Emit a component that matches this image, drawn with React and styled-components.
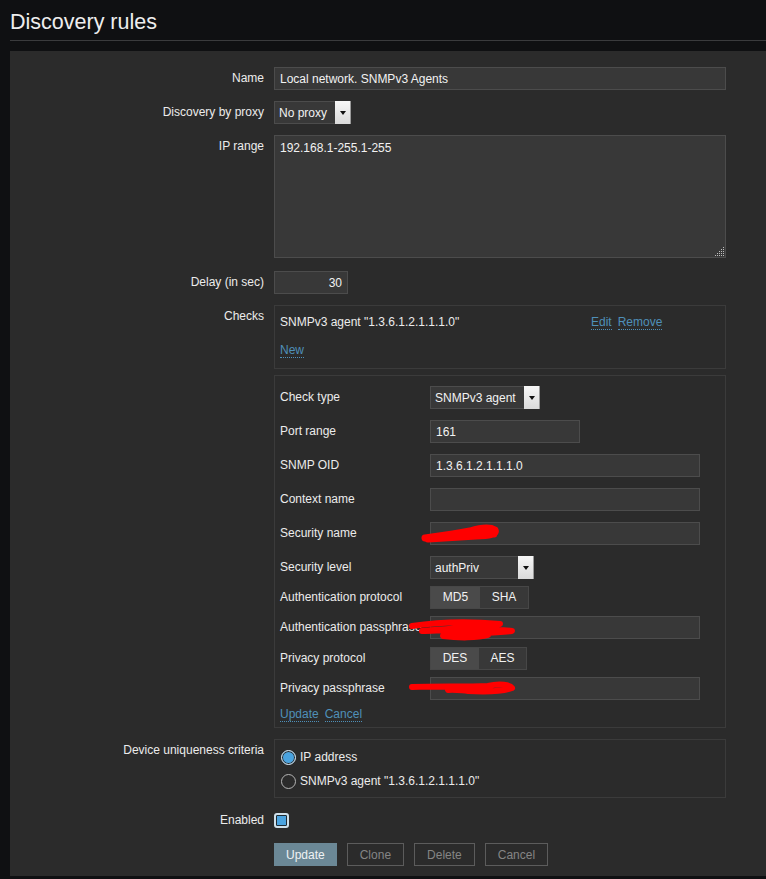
import React from "react";
import styled, { createGlobalStyle } from "styled-components";

const GlobalStyle = createGlobalStyle`
  html, body {
    margin: 0;
    padding: 0;
    background: #0f1012;
  }
  body {
    font-family: "Liberation Sans", Arial, sans-serif;
    font-size: 12px;
    color: #ececec;
  }
`;

const Page = styled.div`
  padding-left: 10px;
  min-height: 879px;
  box-sizing: border-box;
`;

const Header = styled.div`
  height: 41px;
  box-sizing: border-box;
  padding-top: 9px;
  border-bottom: 1px solid #3a3b3d;
`;

const Title = styled.h1`
  margin: 0;
  font-size: 21.5px;
  font-weight: 400;
  line-height: 26px;
  color: #eeeeee;
`;

const Panel = styled.div`
  margin-top: 10px;
  background: #2b2b2b;
  padding: 16px 0 10px;
`;

const Form = styled.div`
  display: grid;
  grid-template-columns: 254px 452px;
  column-gap: 10px;
  row-gap: 11px;
`;

const Label = styled.div`
  text-align: right;
  line-height: 23px;
  color: #ececec;
  white-space: nowrap;
`;

const TextInput = styled.input`
  box-sizing: border-box;
  width: ${(p) => p.$w || 452}px;
  height: 23px;
  margin: 0;
  padding: 0 5px;
  background: #383838;
  border: 1px solid #4c4c4c;
  color: #f2f2f2;
  font: inherit;
  text-align: ${(p) => (p.$right ? "right" : "left")};
  outline: none;
`;

const AreaWrap = styled.div`
  position: relative;
  width: 452px;
  height: 123px;
  margin-bottom: 2px;
`;

const TextArea = styled.textarea`
  box-sizing: border-box;
  display: block;
  width: 452px;
  height: 123px;
  margin: 0;
  padding: 5px 5px;
  background: #383838;
  border: 1px solid #4c4c4c;
  color: #f2f2f2;
  font: inherit;
  line-height: 14px;
  resize: none;
  outline: none;
`;

const Grip = styled.svg`
  position: absolute;
  right: 1px;
  bottom: 1px;
`;

const SelectBox = styled.div`
  box-sizing: border-box;
  width: ${(p) => p.$w}px;
  height: 23px;
  display: flex;
  align-items: center;
  justify-content: space-between;
  background: #383838;
  border: 1px solid #4c4c4c;
  padding-left: 4px;
  color: #f2f2f2;
`;

const ArrowBtn = styled.span`
  width: 16px;
  height: 23px;
  margin-right: -1px;
  box-sizing: border-box;
  display: flex;
  align-items: center;
  justify-content: center;
  background: linear-gradient(#f7f7f7, #dadada);
  border-right: 1px solid #9a9a9a;
  &::after {
    content: "";
    border-left: 3px solid transparent;
    border-right: 3px solid transparent;
    border-top: 4px solid #111;
    margin-top: 1px;
  }
`;

const Stack = styled.div`
  display: flex;
  flex-direction: column;
  gap: ${(p) => p.$gap || 0}px;
`;

const Box = styled.div`
  box-sizing: border-box;
  width: 452px;
  border: 1px solid #3b3b3b;
  padding: ${(p) => p.$pad};
`;

const CheckLine = styled.div`
  display: grid;
  grid-template-columns: 311px auto;
  align-items: center;
  height: 23px;
  line-height: 23px;
`;

const Links = styled.div`
  display: flex;
  gap: 6px;
  align-items: center;
`;

const Link = styled.a`
  color: #4f90b9;
  text-decoration: none;
  border-bottom: 1px dotted #4f90b9;
  line-height: 13px;
  cursor: pointer;
`;

const SubRow = styled.div`
  position: relative;
  display: grid;
  grid-template-columns: 150px auto;
  align-items: center;
  margin-top: ${(p) => p.$gap}px;
`;

const SubLabel = styled.div`
  line-height: 23px;
  color: #ececec;
  white-space: nowrap;
`;

const Segmented = styled.div`
  display: flex;
  width: max-content;
  border: 1px solid #474747;
`;

const Segment = styled.span`
  box-sizing: border-box;
  width: ${(p) => p.$w}px;
  height: 21px;
  line-height: 21px;
  text-align: center;
  background: ${(p) => (p.$on ? "#4a4a4a" : "#383838")};
  color: #f2f2f2;
`;

const FormLinks = styled.div`
  display: flex;
  gap: 6px;
  margin-top: 6px;
  height: 18px;
  align-items: center;
`;

const Scribble = styled.svg`
  position: absolute;
  left: ${(p) => p.$x}px;
  top: ${(p) => p.$y}px;
  pointer-events: none;
`;

const RadioLine = styled.label`
  display: flex;
  align-items: center;
  gap: 4px;
  line-height: 24px;
  color: #ececec;
`;

const Radio = styled.span`
  box-sizing: border-box;
  width: 15px;
  height: 15px;
  border-radius: 50%;
  border: 1.5px solid ${(p) => (p.$on ? "#d9e3ea" : "#b5b5b5")};
  background: ${(p) => (p.$on ? "#4aa3df" : "#2b2b2b")};
  box-shadow: ${(p) => (p.$on ? "inset 0 0 0 1px #2b2b2b" : "none")};
`;

const CheckRow = styled.div`
  height: 23px;
  display: flex;
  align-items: center;
`;

const CheckBox = styled.span`
  box-sizing: border-box;
  width: 15px;
  height: 15px;
  border-radius: 3px;
  border: 2px solid #cfe0ea;
  background: #4aa3df;
  box-shadow: inset 0 0 0 1px #1d2a33;
`;

const Buttons = styled.div`
  display: flex;
  gap: 10px;
`;

const Button = styled.button`
  height: 23px;
  padding: 0 ${(p) => (p.$primary ? 11 : 12)}px;
  font: inherit;
  border: 1px solid ${(p) => (p.$primary ? "#6b8896" : "#5c5c5c")};
  background: ${(p) => (p.$primary ? "#6b8896" : "transparent")};
  color: ${(p) => (p.$primary ? "#eef2f4" : "#858585")};
  cursor: pointer;
`;

const Select = ({ w, value }) => (
  <SelectBox $w={w}>
    <span>{value}</span>
    <ArrowBtn />
  </SelectBox>
);

const RedMark = ({ x, y, w, h, d, sw }) => (
  <Scribble $x={x} $y={y} width={w} height={h} viewBox={`0 0 ${w} ${h}`}>
    <path d={d} fill="none" stroke="#ff0000" strokeWidth={sw} strokeLinecap="round" strokeLinejoin="round" />
  </Scribble>
);

const gripDots = [];
for (let r = 0; r < 5; r++) {
  for (let c = 4 - r; c < 5; c++) {
    gripDots.push(<rect key={`${r}-${c}`} x={c * 2} y={r * 2} width="1" height="1" fill="#bdbdbd" />);
  }
}

export default function App() {
  return (
    <Page>
      <GlobalStyle />
      <Header>
        <Title>Discovery rules</Title>
      </Header>
      <Panel>
        <Form>
          <Label>Name</Label>
          <TextInput defaultValue="Local network. SNMPv3 Agents" />

          <Label>Discovery by proxy</Label>
          <Select w={77} value="No proxy" />

          <Label>IP range</Label>
          <AreaWrap>
            <TextArea defaultValue="192.168.1-255.1-255" />
            <Grip width="10" height="10" viewBox="0 0 10 10">{gripDots}</Grip>
          </AreaWrap>

          <Label>Delay (in sec)</Label>
          <TextInput $w={74} $right defaultValue="30" />

          <Label>Checks</Label>
          <Stack $gap={6}>
            <Box $pad="5px 5px 6px">
              <Stack $gap={5}>
                <CheckLine>
                  <span>SNMPv3 agent "1.3.6.1.2.1.1.1.0"</span>
                  <Links>
                    <Link>Edit</Link>
                    <Link>Remove</Link>
                  </Links>
                </CheckLine>
                <CheckLine>
                  <Links>
                    <Link>New</Link>
                  </Links>
                </CheckLine>
              </Stack>
            </Box>
            <Box $pad="10px 5px 3px">
              <SubRow $gap={0}>
                <SubLabel>Check type</SubLabel>
                <Select w={110} value="SNMPv3 agent" />
              </SubRow>
              <SubRow $gap={11}>
                <SubLabel>Port range</SubLabel>
                <TextInput $w={150} defaultValue="161" />
              </SubRow>
              <SubRow $gap={11}>
                <SubLabel>SNMP OID</SubLabel>
                <TextInput $w={270} defaultValue="1.3.6.1.2.1.1.1.0" />
              </SubRow>
              <SubRow $gap={11}>
                <SubLabel>Context name</SubLabel>
                <TextInput $w={270} defaultValue="" />
              </SubRow>
              <SubRow $gap={11}>
                <SubLabel>Security name</SubLabel>
                <TextInput $w={270} defaultValue="" />
                <RedMark
                  x={140}
                  y={0}
                  w={82}
                  h={22}
                  sw={7}
                  d="M5 16 C20 14 35 12 50 9 C60 6 70 5 75 8 C77 12 70 14 56 14 C40 15 25 16 8 17 M50 12 C60 11 68 11 74 12"
                />
              </SubRow>
              <SubRow $gap={11}>
                <SubLabel>Security level</SubLabel>
                <Select w={104} value="authPriv" />
              </SubRow>
              <SubRow $gap={7}>
                <SubLabel>Authentication protocol</SubLabel>
                <Segmented>
                  <Segment $w={49} $on>MD5</Segment>
                  <Segment $w={48}>SHA</Segment>
                </Segmented>
              </SubRow>
              <SubRow $gap={7}>
                <SubLabel>Authentication passphrase</SubLabel>
                <TextInput $w={270} defaultValue="" />
                <RedMark
                  x={128}
                  y={0}
                  w={112}
                  h={28}
                  sw={6}
                  d="M4 10 C30 6 60 5 92 8 C70 11 40 13 14 15 C45 14 80 12 104 15 C80 17 55 18 35 20 C50 22 70 22 80 19"
                />
              </SubRow>
              <SubRow $gap={8}>
                <SubLabel>Privacy protocol</SubLabel>
                <Segmented>
                  <Segment $w={48} $on>DES</Segment>
                  <Segment $w={47}>AES</Segment>
                </Segmented>
              </SubRow>
              <SubRow $gap={7}>
                <SubLabel>Privacy passphrase</SubLabel>
                <TextInput $w={270} defaultValue="" />
                <RedMark
                  x={128}
                  y={0}
                  w={112}
                  h={22}
                  sw={6}
                  d="M4 10 C30 9 55 10 80 9 C92 6 102 8 104 11 C96 14 80 15 60 14 C50 13 45 12 40 13"
                />
              </SubRow>
              <FormLinks>
                <Link>Update</Link>
                <Link>Cancel</Link>
              </FormLinks>
            </Box>
          </Stack>

          <Label>Device uniqueness criteria</Label>
          <Box $pad="5px 6px 4px">
            <RadioLine>
              <Radio $on />
              IP address
            </RadioLine>
            <RadioLine>
              <Radio />
              SNMPv3 agent "1.3.6.1.2.1.1.1.0"
            </RadioLine>
          </Box>

          <Label>Enabled</Label>
          <CheckRow>
            <CheckBox />
          </CheckRow>

          <span />
          <Buttons>
            <Button $primary>Update</Button>
            <Button>Clone</Button>
            <Button>Delete</Button>
            <Button>Cancel</Button>
          </Buttons>
        </Form>
      </Panel>
    </Page>
  );
}
